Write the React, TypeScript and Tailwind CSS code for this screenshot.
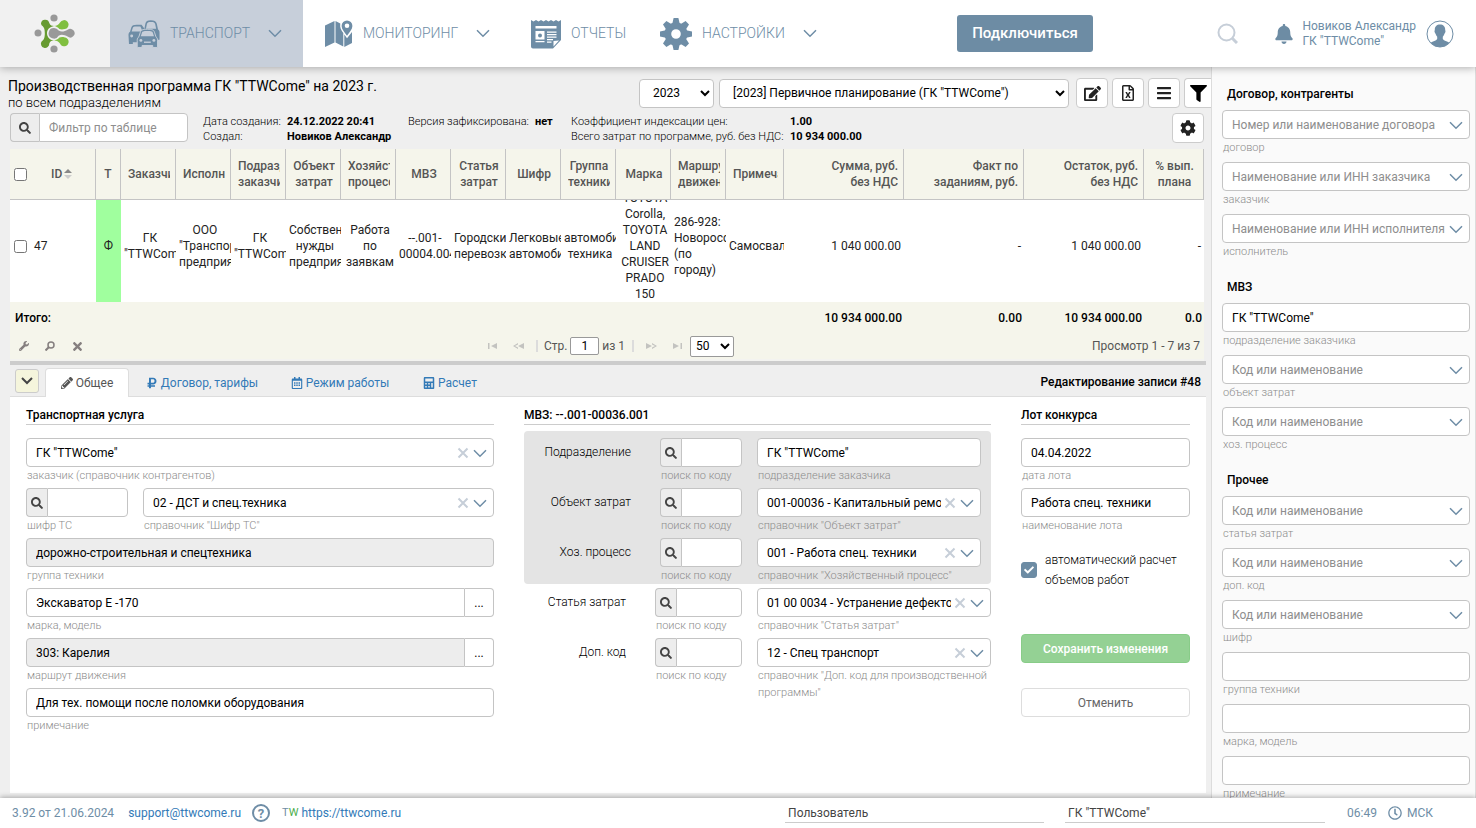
import React, { useId, useState } from "react";
import {
  FaBars,
  FaBell,
  FaCalculator,
  FaCheck,
  FaCog,
  FaEdit,
  FaFilter,
  FaPencilAlt,
  FaRegCalendarAlt,
  FaRegClock,
  FaRegFileExcel,
  FaRubleSign,
  FaSearch,
  FaTimes,
  FaWrench,
} from "react-icons/fa";

type Column = {
  title: string;
  width: string;
  align?: "right";
}

const columns: Column[] = [
  { title: "Т", width: "w-[25px]" },
  { title: "Заказчик", width: "w-[55px]" },
  { title: "Исполнитель", width: "w-[55px]" },
  { title: "Подразделение заказчика", width: "w-[55px]" },
  { title: "Объект затрат", width: "w-[55px]" },
  { title: "Хозяйственный процесс", width: "w-[55px]" },
  { title: "МВЗ", width: "w-[55px]" },
  { title: "Статья затрат", width: "w-[55px]" },
  { title: "Шифр", width: "w-[55px]" },
  { title: "Группа техники", width: "w-[55px]" },
  { title: "Марка", width: "w-[55px]" },
  { title: "Маршрут движения", width: "w-[55px]" },
  { title: "Примечание", width: "w-[58px]" },
  { title: "Сумма, руб. без\u00a0НДС", width: "w-[120px]", align: "right" },
  { title: "Факт по заданиям, руб.", width: "w-[120px]", align: "right" },
  { title: "Остаток, руб. без\u00a0НДС", width: "w-[120px]", align: "right" },
  { title: "% вып. плана", width: "w-[60px]" },
];

const rowCells = [
  'ГК "TTWCome"',
  'ООО "Транспортное предприятие"',
  'ГК "TTWCome"',
  "Собственные нужды предприятия",
  "Работа по заявкам",
  "--.001- 00004.004",
  "Городские перевозки",
  "Легковые автомобили",
  "автомобильная техника",
  "TOYOTA Corolla, TOYOTA LAND CRUISER PRADO 150",
];

const inputClass =
  "block h-[29px] w-full min-w-0 rounded border border-[#c4c4c4] px-[9px] text-xs placeholder:text-[#8e8e8e]";

const Logo = () => (
  <svg width="42" height="40" viewBox="0 0 42 40" aria-hidden="true">
    <g fill="#999">
      <circle cx="20" cy="4" r="3.6" />
      <circle cx="4" cy="19" r="3.5" />
      <circle cx="20" cy="35" r="3.6" />
      <path d="M20 14a5.300 5.300 0 0 1 4.600 2.600c3 1.800 6 .8 9-.8a4.300 4.300 0 1 1 0 6.800c-3-1.600-6-2.600-9-.8A5.300 5.300 0 1 1 20 14z" />
    </g>
    <path
      d="M7 9.500a4.200 4.200 0 0 1 8.300-.5c.8 2.400 2.600 3 4.700 3-4.400.8-7 3.600-7 7.200s2.600 6.600 7 7.400c-2.200 0-3.900.6-4.700 3a4.200 4.200 0 1 1-7.700-2.200c2.600-2 3.200-3.800 3.200-8.200s-.8-6-3-7.600A4.200 4.200 0 0 1 7 9.500z"
      fill="#679b31"
    />
    <path
      d="M20 12c3 0 4.600-1.200 6-3.400a4.500 4.500 0 1 1 5 6.400c-3 .6-4 .4-5.600 0-1.600-1.800-3.200-2.800-5.400-3zM20 26.600c3 0 4.600 1 6 3a4.500 4.500 0 1 0 5-6.200c-3-.6-4-.4-5.600.2-1.600 1.800-3.200 2.600-5.400 3z"
      fill="#80bf40"
    />
  </svg>
);

const CarsIcon = () => (
  <svg width="32" height="29" viewBox="0 0 33 29" aria-hidden="true">
    <g fill="#6e8da6" stroke="#c7cfda">
      <path d="M16.500 12l1.400-7.600C18.400 1.800 20 .8 23.500.8s5.600 1 6.200 3.600L31 10.500c1 .8 1.500 1.700 1.500 3v7.500h-4v2h-5V12z" stroke="none" />
      <path d="M18.500 9.500l1-4.700c.3-1.600 1.200-2.200 4.200-2.200s4 .6 4.300 2.200l1 4.700z" fill="#c7cfda" stroke="none" />
      <path d="M.5 16c0-1.600.6-2.600 1.600-3.300l1.300-4.400C4.100 6.200 5.600 5.500 9 5.500h5l3 4-2 14H5v1.800H1z" stroke="none" />
      <path d="M3.800 12.500l1.100-3.600C5.300 7.600 6.200 7.200 9 7.200h3.800l2.200 5.300z" fill="#c7cfda" stroke="none" />
      <circle cx="3.800" cy="17" r="1.500" fill="#c7cfda" stroke="none" />
      <path
        d="M9.500 21.500c0-1.700.7-2.900 1.700-3.600l1.500-4.700c.6-2.200 2.200-3.100 7.300-3.100s6.700.9 7.300 3.100l1.500 4.700c1 .7 1.700 1.900 1.700 3.600v7.400h-5v-2h-11v2h-5z"
      />
      <path d="M13.200 17.400l1.200-3.700c.4-1.500 1.400-1.900 5.600-1.900s5.200.4 5.600 1.900l1.200 3.700z" fill="#c7cfda" stroke="none" />
      <circle cx="13.300" cy="21.600" r="1.500" fill="#c7cfda" stroke="none" />
      <circle cx="26.700" cy="21.600" r="1.500" fill="#c7cfda" stroke="none" />
      <path d="M16.500 23.500h7" strokeWidth="1.400" />
    </g>
  </svg>
);

const MapIcon = () => (
  <svg width="28" height="28" viewBox="0 0 28 28" fill="#6e8da6" aria-hidden="true">
    <path d="M0 5.500L9.500 1v21.500L0 27z" />
    <path d="M10.500 1l4.800 2.400c-.6 3.800.6 6.600 3 9.600v13.500l-7.800-4z" />
    <path d="M19.300 14.500l2.700 3.800 5-6.200v11L19.300 27z" />
    <path
      fillRule="evenodd"
      d="M22 .5a5.400 5.400 0 0 1 5.400 5.400c0 3.300-3 6.400-5.400 9.800-2.400-3.400-5.400-6.500-5.400-9.800A5.400 5.400 0 0 1 22 .5zm0 3a2.300 2.300 0 1 0 0 4.600 2.300 2.300 0 0 0 0-4.600z"
    />
  </svg>
);

const ReportIcon = () => (
  <svg width="30" height="30" viewBox="0 0 30 30" aria-hidden="true">
    <path
      d="M0 1l2.500 1.500L5 1l2.500 1.500L10 1l2.500 1.500L15 1l2.500 1.500L20 1l2.500 1.500L25 1l2.500 1.500L30 1v20l-8 8.500H2a2 2 0 0 1-2-2z"
      fill="#6e8da6"
    />
    <path d="M4.500 7h21v2.600h-21zM4.500 12h9v8.500h-9zM16 12.500h9.500v1.200H16zM16 15h9.500v1.200H16zM16 17.500h9.500v1.200H16zM16 20h6v1.200h-6zM4.500 22h9v1.200h-9zM16 22.500h4.500v1.200H16zM22.500 22l5.500-.5-5.500 6z" fill="#fff" />
    <circle cx="9" cy="16.500" r="2" fill="#6e8da6" />
  </svg>
);

const GearIcon = () => (
  <svg width="32" height="32" viewBox="-16 -16 32 32" fill="#6e8da6" aria-hidden="true">
    {[0, 45, 90, 135, 180, 225, 270, 315].map((angle) => (
      <path key={angle} d="M-4-9l1.600-7h4.800L4-9z" transform={`rotate(${angle})`} />
    ))}
    <path fillRule="evenodd" d="M0-11.500a11.500 11.500 0 1 1 0 23 11.500 11.500 0 0 1 0-23zm0 6.700a4.800 4.800 0 1 0 0 9.600 4.800 4.800 0 0 0 0-9.600z" />
  </svg>
);

const AvatarIcon = () => (
  <svg width="28" height="28" viewBox="0 0 28 28" aria-hidden="true">
    <circle cx="14" cy="14" r="13" fill="#fff" stroke="#6e8da6" />
    <path
      d="M14 4.500c3.300 0 5.200 2 5.200 5.200 0 .8.5 1.200.2 2.400-.2 1-.8 1.200-1 2-.3 1.200-1 2-1.600 2.700v2.200c1.200 2 4.200 2 6.700 3.800A13 13 0 0 1 14 27a13 13 0 0 1-9.500-4.200c2.500-1.800 5.500-1.800 6.700-3.800v-2.200c-.6-.7-1.300-1.500-1.600-2.700-.2-.8-.8-1-1-2-.3-1.200.2-1.600.2-2.400 0-3.200 1.900-5.200 5.200-5.200z"
      fill="#6e8da6"
    />
  </svg>
);

const Chevron = ({ className = "" }: { className?: string }) => (
  <svg width="14" height="9" viewBox="0 0 14 9" fill="none" stroke="#6e8da6" strokeWidth="1.500" className={className} aria-hidden="true">
    <path d="M1 1.200l6 6 6-6" />
  </svg>
);

interface FieldProps {
  caption: string;
  className?: string;
  children: (id: string) => React.ReactNode;
}

const Field = ({ caption, className = "", children }: FieldProps) => {
  const id = useId();
  return (
    <div className={`min-w-0 ${className}`}>
      {children(id)}
      <label htmlFor={id} className="block pl-px text-[11px] leading-[17px] font-light text-[#8c8c8c]">
        {caption}
      </label>
    </div>
  );
};

interface TextFieldProps {
  caption: string;
  value?: string;
  readOnly?: boolean;
  more?: boolean;
}

const TextField = ({ caption, value = "", readOnly = false, more = false }: TextFieldProps) => (
  <Field caption={caption} className="flex-1">
    {(id) => (
      <div className="flex">
        <input
          id={id}
          type="text"
          defaultValue={value}
          readOnly={readOnly}
          className={`${inputClass} text-black ${readOnly ? "bg-[#ededed]" : "bg-white"} ${more ? "rounded-r-none" : ""}`}
        />
        {more && (
          <button type="button" className="h-[29px] w-[29px] shrink-0 rounded-r border border-l-0 border-[#c4c4c4] bg-white text-xs">
            ...
          </button>
        )}
      </div>
    )}
  </Field>
);

interface ComboFieldProps {
  caption: string;
  value?: string;
  placeholder?: string;
}

const ComboField = ({ caption, value, placeholder }: ComboFieldProps) => {
  const [selected, setSelected] = useState(value ?? "");

  return (
    <Field caption={caption} className="flex-1">
      {(id) => (
        <div className="relative">
          <select
            id={id}
            value={selected}
            onChange={(e) => setSelected(e.target.value)}
            className={`${inputClass} appearance-none overflow-hidden bg-white ${value ? "pr-[39px]" : "pr-6"} ${selected ? "text-black" : "text-[#8e8e8e]"}`}
          >
            <option value="">{placeholder}</option>
            {value && <option value={value}>{value}</option>}
          </select>
          {value && (
            <button
              type="button"
              aria-label="Очистить"
              onClick={() => setSelected("")}
              className="absolute top-[9px] right-[25px] text-[#c6ced8]"
            >
              <svg width="12" height="12" viewBox="0 0 12 12" stroke="currentColor" strokeWidth="2">
                <path d="M1.500 1.500l9 9M10.500 1.500l-9 9" />
              </svg>
            </button>
          )}
          <Chevron className="pointer-events-none absolute top-[11px] right-[7px]" />
        </div>
      )}
    </Field>
  );
};

const SearchField = ({ caption, width }: { caption: string; width: string }) => (
  <Field caption={caption} className={`shrink-0 ${width}`}>
    {(id) => (
      <div className="flex">
        <button type="button" aria-label="Найти" className="flex h-[29px] w-[21px] shrink-0 items-center justify-center rounded-l border border-r-0 border-[#c4c4c4] bg-[#ededed] text-[#444]">
          <FaSearch size={12} />
        </button>
        <input id={id} type="text" className={`${inputClass} rounded-l-none bg-white text-black`} />
      </div>
    )}
  </Field>
);

const FormLabel = ({ width, children }: { width: string; children: React.ReactNode }) => (
  <div className={`mr-[29px] shrink-0 text-right text-xs leading-[29px] font-light ${width}`}>{children}</div>
);

const SectionTitle = ({ children }: { children: React.ReactNode }) => (
  <h2 className="mb-1.5 border-b border-[#ccc] text-xs leading-[18px] font-medium text-black">{children}</h2>
);

const SidebarTitle = ({ children }: { children: React.ReactNode }) => (
  <h2 className="px-[5px] pt-3 pb-px text-xs leading-[18px] font-medium text-black">{children}</h2>
);

const NavItem = ({ icon, title, arrow = true, className }: { icon: React.ReactNode; title: string; arrow?: boolean; className: string }) => (
  <a href="#" className={`flex h-full shrink-0 items-center gap-2.5 text-sm font-light text-[#6e8da6] ${className}`}>
    {icon}
    <span className="-mt-0.5">{title}</span>
    {arrow && <Chevron className="ml-2" />}
  </a>
);

const Header = () => (
  <header className="relative z-10 flex h-[67px] shrink-0 items-center bg-white shadow-[0_1px_8px_rgba(0,0,0,0.3)]">
    <a href="#" aria-label="TTWCome" className="flex h-full w-[110px] shrink-0 items-center justify-center bg-[#f1f1f1]">
      <Logo />
    </a>
    <nav className="flex h-full">
      <NavItem icon={<CarsIcon />} title="ТРАНСПОРТ" className="w-[193px] bg-[#c7cfda] pl-[18px]" />
      <NavItem icon={<MapIcon />} title="МОНИТОРИНГ" className="w-[207px] pl-[22px]" />
      <NavItem icon={<ReportIcon />} title="ОТЧЕТЫ" arrow={false} className="w-[130px] pl-[21px]" />
      <NavItem icon={<GearIcon />} title="НАСТРОЙКИ" className="w-[180px] pl-5" />
    </nav>
    <button type="button" className="ml-[137px] h-[37px] w-[136px] shrink-0 rounded-[3px] bg-[#6d8ca4] text-[15px] font-medium text-white">
      Подключиться
    </button>
    <div className="ml-auto flex items-center pr-[22px]">
      <button type="button" aria-label="Поиск" className="mr-9">
        <svg width="21" height="21" viewBox="0 0 21 21" fill="none" stroke="#c6ced8" strokeWidth="2">
          <circle cx="9.500" cy="9.500" r="8" />
          <path d="M15 15l5 5" strokeWidth="3" />
        </svg>
      </button>
      <button type="button" aria-label="Уведомления" className="mr-2 text-[#6d8ca4]">
        <FaBell size={20} />
      </button>
      <p className="mr-2.5 text-xs leading-[15px] text-[#6e8da6]">
        Новиков Александр
        <br />
        ГК "TTWCome"
      </p>
      <AvatarIcon />
    </div>
  </header>
);

const ToolButton = ({ label, children, className = "w-8" }: { label: string; children: React.ReactNode; className?: string }) => (
  <button
    type="button"
    aria-label={label}
    className={`flex h-[30px] shrink-0 items-center justify-center rounded border border-[#ccc] bg-white text-[#222] ${className}`}
  >
    {children}
  </button>
);

const ProgramHeader = () => (
  <>
    <div className="flex items-start justify-between pt-[11px] pl-2">
      <div className="text-black">
        <h1 className="text-sm leading-4">Производственная программа ГК "TTWCome" на 2023 г.</h1>
        <p className="text-[13px] leading-[18px] font-light">по всем подразделениям</p>
      </div>
      <div className="flex items-center">
        <select aria-label="Год" className="h-[29px] w-[75px] rounded border border-[#c4c4c4] bg-white px-[9px] text-xs text-black">
          <option>2023</option>
        </select>
        <select aria-label="Версия программы" className="ml-[5px] h-[29px] w-[350px] rounded border border-[#c4c4c4] bg-white px-[9px] text-xs text-black">
          <option>[2023] Первичное планирование (ГК "TTWCome")</option>
        </select>
        <div className="ml-[7px] flex gap-1">
          <ToolButton label="Редактировать">
            <FaEdit size={17} />
          </ToolButton>
          <ToolButton label="Выгрузить в Excel">
            <FaRegFileExcel size={16} />
          </ToolButton>
          <ToolButton label="Меню">
            <FaBars size={16} />
          </ToolButton>
          <ToolButton label="Фильтр" className="w-[27px] rounded-r-none border-r-0">
            <FaFilter size={17} className="text-black" />
          </ToolButton>
        </div>
      </div>
    </div>
    <div className="flex items-start pt-px pr-[7px] pl-2.5">
      <div className="flex w-[178px] shrink-0">
        <button type="button" aria-label="Найти" className="flex h-[29px] w-[29px] shrink-0 items-center justify-center rounded-l border border-r-0 border-[#c4c4c4] bg-[#ededed] text-[#444]">
          <FaSearch size={12} />
        </button>
        <input type="text" aria-label="Фильтр по таблице" placeholder="Фильтр по таблице" className={`${inputClass} rounded-l-none bg-white text-black`} />
      </div>
      <dl className="ml-[15px] grid grid-cols-[84px_121px_127px_36px_219px_auto] pt-px text-[11px] leading-[15px] font-light text-black">
        <dt>Дата создания:</dt>
        <dd className="font-bold">24.12.2022 20:41</dd>
        <dt>Версия зафиксирована:</dt>
        <dd className="font-bold">нет</dd>
        <dt>Коэффициент индексации цен:</dt>
        <dd className="font-bold">1.00</dd>
        <dt>Создал:</dt>
        <dd className="col-span-3 font-bold">Новиков Александр</dd>
        <dt>Всего затрат по программе, руб. без НДС:</dt>
        <dd className="font-bold">10 934 000.00</dd>
      </dl>
      <div className="ml-auto">
        <ToolButton label="Настройки таблицы">
          <FaCog size={16} />
        </ToolButton>
      </div>
    </div>
  </>
);

const ProgramTable = () => (
  <table className="w-full table-fixed border-separate border-spacing-0 text-xs leading-4">
    <thead>
      <tr className="h-[51px] bg-[#f5f5eb] text-[#555]">
        <th className="w-[86px] border-r border-b border-[#c4c4c4] p-0">
          <div className="flex items-center pl-1">
            <input type="checkbox" aria-label="Выбрать все" className="mr-6 size-[13px]" />
            <span className="font-medium">ID</span>
            <svg width="8" height="10" viewBox="0 0 8 10" className="ml-0.5" aria-hidden="true">
              <path d="M0 4l4-4 4 4z" fill="#888" />
              <path d="M0 6l4 4 4-4z" fill="#ccc" />
            </svg>
          </div>
        </th>
        {columns.map((column) => (
          <th key={column.title} className={`border-r border-b border-[#c4c4c4] p-0 font-medium ${column.width}`}>
            <div className={`overflow-hidden ${column.title === "Т" ? "" : column.align === "right" ? "mr-[5px] ml-6 text-right" : "mr-[5px] ml-[7px]"}`}>
              {column.align === "right" ? <span className="inline-block w-[90px]">{column.title}</span> : column.title}
            </div>
          </th>
        ))}
      </tr>
    </thead>
    <tbody className="bg-white text-[#222]">
      <tr>
        <td className="p-0">
          <label className="flex h-[102px] items-center pb-2.5 pl-1">
            <input type="checkbox" className="mr-[7px] size-[13px]" />
            47
          </label>
        </td>
        <td className="bg-[#a0ff9e] p-0">
          <div className="flex h-[102px] items-center justify-center pb-2.5">Ф</div>
        </td>
        {rowCells.map((cell, index) => (
          <td key={index} className="p-0">
            <div className="flex h-[102px] items-center overflow-hidden pb-2.5 pl-[3px]">
              <span className="w-full text-center">{cell}</span>
            </div>
          </td>
        ))}
        <td className="p-0">
          <div className="flex h-[102px] items-center overflow-hidden pb-2.5 pl-[3px]">
            <span className="w-full">286-928: Новороссийск (по городу)</span>
          </div>
        </td>
        <td className="p-0">
          <div className="flex h-[102px] items-center overflow-hidden pb-2.5 pl-[3px]">Самосвалы</div>
        </td>
        {["1 040 000.00", "-", "1 040 000.00", "-"].map((value, index) => (
          <td key={index} className="p-0">
            <div className="flex h-[102px] items-center justify-end pr-[3px] pb-2.5">{value}</div>
          </td>
        ))}
      </tr>
    </tbody>
    <tfoot>
      <tr className="h-[31px] bg-[#f5f5eb] font-medium text-black">
        <td colSpan={14} className="p-0 pl-[5px]">
          Итого:
        </td>
        {["10 934 000.00", "0.00", "10 934 000.00", "0.0"].map((value, index) => (
          <td key={index} className="p-0 pr-0.5 text-right">
            {value}
          </td>
        ))}
      </tr>
    </tfoot>
  </table>
);

const Pager = () => (
  <div className="grid h-[26px] grid-cols-[1fr_auto_1fr] items-center bg-[#f5f5eb] text-xs text-[#555]">
    <div className="flex gap-4 pl-[9px] text-[#857f7f]">
      <button type="button" aria-label="Настроить столбцы">
        <FaWrench size={10} />
      </button>
      <button type="button" aria-label="Поиск" className="-scale-x-100">
        <svg width="10" height="10" viewBox="0 0 10 10" fill="none" stroke="currentColor" strokeWidth="1.500">
          <circle cx="4" cy="4" r="3" />
          <path d="M6 6l3.500 3.500" strokeWidth="2" />
        </svg>
      </button>
      <button type="button" aria-label="Сбросить">
        <FaTimes size={13} />
      </button>
    </div>
    <div className="flex items-center pl-2">
      <button type="button" aria-label="Первая страница" className="mr-4">
        <svg width="9" height="6" viewBox="0 0 9 6" fill="#c3c3c0"><path d="M0 0h1.500v6H0zM9 0v6L3 3z" /></svg>
      </button>
      <button type="button" aria-label="Предыдущая страница" className="mr-3">
        <svg width="11" height="6" viewBox="0 0 11 6" fill="#c3c3c0"><path d="M5 0v1.500L2 3l3 1.500V6L0 3zM11 0v6L5 3z" /></svg>
      </button>
      <span className="mr-1.5 h-3 w-0.5 bg-[#dcdcdc]" />
      <label className="flex items-center gap-[3px]">
        Стр.
        <input type="text" defaultValue="1" className="h-[18px] w-[29px] rounded-[2px] border border-[#999] bg-white text-center text-xs text-black" />
      </label>
      <span className="ml-[3px]">из 1</span>
      <span className="mr-3 ml-[7px] h-3 w-0.5 bg-[#dcdcdc]" />
      <button type="button" aria-label="Следующая страница" className="mr-4">
        <svg width="11" height="6" viewBox="0 0 11 6" fill="#c3c3c0"><path d="M6 0v1.500L9 3 6 4.500V6l5-3zM0 0v6l6-3z" /></svg>
      </button>
      <button type="button" aria-label="Последняя страница" className="mr-2">
        <svg width="9" height="6" viewBox="0 0 9 6" fill="#c3c3c0"><path d="M7.500 0H9v6H7.500zM0 0v6l6-3z" /></svg>
      </button>
      <select aria-label="Строк на странице" className="h-[21px] w-11 rounded-[2px] border border-[#999] bg-white px-px text-xs text-black">
        <option>50</option>
      </select>
    </div>
    <p className="pr-1 text-right">Просмотр 1 - 7 из 7</p>
  </div>
);

const tabs = [
  { title: "Общее", icon: <FaPencilAlt size={12} />, width: "w-[84px]" },
  { title: "Договор, тарифы", icon: <FaRubleSign size={12} />, width: "w-[146px]" },
  { title: "Режим работы", icon: <FaRegCalendarAlt size={12} />, width: "w-[130px]" },
  { title: "Расчет", icon: <FaCalculator size={12} />, width: "w-[90px]" },
];

const Tabs = () => {
  const [active, setActive] = useState(0);

  return (
    <div className="flex h-8 shrink-0 items-end border-b border-[#ddd] px-[5px]">
      <button type="button" aria-label="Свернуть" className="mr-1.5 mb-[3px] flex size-6 items-center justify-center rounded-[3px] border border-[#ccc] bg-[#f5f5dc]">
        <svg width="12" height="8" viewBox="0 0 12 8" fill="none" stroke="#444" strokeWidth="2">
          <path d="M1 1l5 5 5-5" />
        </svg>
      </button>
      <div className="-mb-px flex">
        {tabs.map((tab, index) => (
          <button
            key={tab.title}
            type="button"
            onClick={() => setActive(index)}
            className={`flex h-[29px] items-center justify-center gap-[3px] rounded-t border border-b-0 text-xs ${tab.width} ${
              active === index ? "border-[#ddd] bg-white text-[#555]" : "border-transparent text-[#337ab7]"
            }`}
          >
            {tab.icon}
            {tab.title}
          </button>
        ))}
      </div>
      <p className="ml-auto pb-[5px] text-xs leading-[18px] font-medium text-black">Редактирование записи #48</p>
    </div>
  );
};

const ServiceForm = () => (
  <form className="grid grow grid-cols-[468fr_467fr_169fr] items-start gap-[30px] bg-white px-4 pt-[9px]">
    <section>
      <SectionTitle>Транспортная услуга</SectionTitle>
      <div className="flex flex-col gap-1 pt-[7px]">
        <ComboField caption="заказчик (справочник контрагентов)" value={'ГК "TTWCome"'} />
        <div className="flex gap-[15px]">
          <SearchField caption="шифр ТС" width="w-[102px]" />
          <ComboField caption={'справочник "Шифр ТС"'} value="02 - ДСТ и спец.техника" />
        </div>
        <TextField caption="группа техники" value="дорожно-строительная и спецтехника" readOnly />
        <TextField caption="марка, модель" value="Экскаватор Е -170" more />
        <TextField caption="маршрут движения" value="303: Карелия" readOnly more />
        <TextField caption="примечание" value="Для тех. помощи после поломки оборудования" />
      </div>
    </section>

    <section>
      <SectionTitle>МВЗ: --.001-00036.001</SectionTitle>
      <div className="flex flex-col gap-1 rounded bg-[#e4e4e4] pt-[7px] pr-2.5">
        <div className="flex">
          <FormLabel width="w-[107px]">Подразделение</FormLabel>
          <SearchField caption="поиск по коду" width="mr-[15px] w-[82px]" />
          <TextField caption="подразделение заказчика" value={'ГК "TTWCome"'} />
        </div>
        <div className="flex">
          <FormLabel width="w-[107px]">Объект затрат</FormLabel>
          <SearchField caption="поиск по коду" width="mr-[15px] w-[82px]" />
          <ComboField caption={'справочник "Объект затрат"'} value="001-00036 - Капитальный ремонт" />
        </div>
        <div className="flex">
          <FormLabel width="w-[107px]">Хоз. процесс</FormLabel>
          <SearchField caption="поиск по коду" width="mr-[15px] w-[82px]" />
          <ComboField caption={'справочник "Хозяйственный процесс"'} value="001 - Работа спец. техники" />
        </div>
      </div>
      <div className="flex flex-col gap-1 pt-1">
        <div className="flex">
          <FormLabel width="w-[102px]">Статья затрат</FormLabel>
          <SearchField caption="поиск по коду" width="mr-[15px] w-[87px]" />
          <ComboField caption={'справочник "Статья затрат"'} value="01 00 0034 - Устранение дефектов" />
        </div>
        <div className="flex">
          <FormLabel width="w-[102px]">Доп. код</FormLabel>
          <SearchField caption="поиск по коду" width="mr-[15px] w-[87px]" />
          <ComboField caption={'справочник "Доп. код для производственной программы"'} value="12 - Спец транспорт" />
        </div>
      </div>
    </section>

    <section>
      <SectionTitle>Лот конкурса</SectionTitle>
      <div className="flex flex-col gap-1 pt-[7px]">
        <TextField caption="дата лота" value="04.04.2022" />
        <TextField caption="наименование лота" value="Работа спец. техники" />
      </div>
      <label className="mt-4 flex items-center gap-2 text-xs leading-5 font-light text-black">
        <span className="relative size-4 shrink-0">
          <input type="checkbox" defaultChecked className="peer block size-4 appearance-none rounded-[3px] border border-[#6d8ca4] checked:bg-[#6d8ca4]" />
          <FaCheck size={10} className="pointer-events-none absolute top-[3px] left-[3px] hidden text-white peer-checked:block" />
        </span>
        автоматический расчет объемов работ
      </label>
      <button type="submit" className="mt-11 h-[29px] w-full rounded border border-[#88cc88] bg-[#94d194] text-xs font-medium text-white">
        Сохранить изменения
      </button>
      <button type="button" className="mt-[25px] h-[29px] w-full rounded border border-[#ddd] bg-white text-xs text-[#666]">
        Отменить
      </button>
    </section>
  </form>
);

const FilterSidebar = () => (
  <aside className="w-[265px] shrink-0 overflow-hidden border-x border-[#dcdcdc] bg-[#fafafa] pt-1.5 pr-[5px] pl-2.5">
    <div className="flex flex-col gap-1.5">
      <SidebarTitle>Договор, контрагенты</SidebarTitle>
      <ComboField caption="договор" placeholder="Номер или наименование договора" />
      <ComboField caption="заказчик" placeholder="Наименование или ИНН заказчика" />
      <ComboField caption="исполнитель" placeholder="Наименование или ИНН исполнителя" />
      <SidebarTitle>МВЗ</SidebarTitle>
      <TextField caption="подразделение заказчика" value={'ГК "TTWCome"'} />
      <ComboField caption="объект затрат" placeholder="Код или наименование" />
      <ComboField caption="хоз. процесс" placeholder="Код или наименование" />
      <SidebarTitle>Прочее</SidebarTitle>
      <ComboField caption="статья затрат" placeholder="Код или наименование" />
      <ComboField caption="доп. код" placeholder="Код или наименование" />
      <ComboField caption="шифр" placeholder="Код или наименование" />
      <TextField caption="группа техники" />
      <TextField caption="марка, модель" />
      <TextField caption="примечание" />
    </div>
  </aside>
);

const Footer = () => (
  <footer className="relative z-10 flex h-[30px] shrink-0 items-center bg-white px-3 text-xs text-[#6e8da6] shadow-[0_-1px_5px_rgba(0,0,0,0.3)]">
    <span>3.92 от 21.06.2024</span>
    <a href="mailto:support@ttwcome.ru" className="ml-3.5 text-[#337ab7]">
      support@ttwcome.ru
    </a>
    <button type="button" aria-label="Помощь" className="ml-[11px] flex size-[18px] items-center justify-center rounded-full border-2 border-[#6e8da6] text-[13px] leading-none font-bold">
      ?
    </button>
    <span className="ml-3 text-[11px]">
      T<span className="text-[#4cae4c]">W</span>
    </span>
    <a href="https://ttwcome.ru" className="ml-[3px] text-[#337ab7]">
      https://ttwcome.ru
    </a>
    <input type="text" aria-label="Роль" defaultValue="Пользователь" className="mr-[21px] ml-auto h-[19px] w-[259px] border-b border-[#ccc] px-[3px] text-[#444]" />
    <input type="text" aria-label="Организация" defaultValue={'ГК "TTWCome"'} className="mr-[22px] h-[19px] w-[260px] border-b border-[#ccc] px-[3px] text-[#444]" />
    <span>06:49</span>
    <FaRegClock size={14} className="mr-[5px] ml-[11px]" />
    <span className="mr-[31px]">МСК</span>
  </footer>
);

const App = () => (
  <div className="flex h-screen flex-col overflow-hidden bg-[#efefef] font-[Roboto,sans-serif]">
    <Header />
    <div className="flex min-h-0 grow">
      <main className="flex min-w-0 grow flex-col overflow-hidden">
        <ProgramHeader />
        <div className="mt-[5px] mr-[7px] ml-2.5 border-b-2 border-[#f3f3f0]">
          <ProgramTable />
          <Pager />
        </div>
        <div className="mr-[5px] mb-[5px] ml-2.5 flex min-h-0 grow flex-col border-t-4 border-[#ccc]">
          <Tabs />
          <ServiceForm />
        </div>
      </main>
      <FilterSidebar />
    </div>
    <Footer />
  </div>
);

export default App;
